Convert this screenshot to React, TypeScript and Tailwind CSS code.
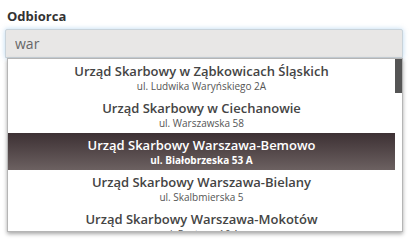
import { useState } from "react";

const OFFICES = [
  { id: "zab", name: "Urząd Skarbowy w Ząbkowicach Śląskich", street: "ul. Ludwika Waryńskiego 2A" },
  { id: "cie", name: "Urząd Skarbowy w Ciechanowie", street: "ul. Warszawska 58" },
  { id: "bem", name: "Urząd Skarbowy Warszawa-Bemowo", street: "ul. Białobrzeska 53 A" },
  { id: "bie", name: "Urząd Skarbowy Warszawa-Bielany", street: "ul. Skalbmierska 5" },
  { id: "mok", name: "Urząd Skarbowy Warszawa-Mokotów", street: "ul. Postępu 16 A" },
];

export default function App() {
  const [query, setQuery] = useState("war");
  const [active, setActive] = useState("bem");

  return (
    <div className="w-[415px] h-[245px] bg-white overflow-hidden font-['Open_Sans',sans-serif]">
      <div className="pl-[5px] pr-[12px] pt-[8px]">
        <label className="block pl-[2px] text-[13px] leading-[16px] font-bold text-[#333]">Odbiorca</label>

        <div className="relative mt-[5px]">
          {/* Input */}
          <input
            value={query}
            onChange={(e) => setQuery(e.target.value)}
            autoFocus
            className="w-full h-[29px] bg-[#e8e7e6] border border-[#c9d3da] rounded-t-[2px] px-[9px] text-[14px] text-[#666] outline-none shadow-[0_0_5px_rgba(120,180,230,0.5)] caret-[#222]"
          />

          {/* Dropdown */}
          <div className="absolute left-[2px] right-0 top-[29px] h-[174px] bg-white border border-[#b5b5b5] shadow-[0_2px_4px_rgba(0,0,0,0.35)] flex overflow-hidden">
            <ul className="flex-1">
              {OFFICES.map((o) => (
                <li
                  key={o.id}
                  onMouseEnter={() => setActive(o.id)}
                  className={`h-[37px] pt-[4px] text-center cursor-pointer ${
                    active === o.id ? "bg-gradient-to-b from-[#3d3134] to-[#6c6161] text-white" : "text-[#444]"
                  }`}
                >
                  <p className="text-[13px] leading-[17px] font-semibold">{o.name}</p>
                  <p className={`text-[10px] leading-[13px] ${active === o.id ? "font-bold" : "text-[#555]"}`}>{o.street}</p>
                </li>
              ))}
            </ul>
            {/* Scrollbar */}
            <div className="w-[7px] shrink-0 bg-white">
              <div className="h-[34px] bg-[#555]" />
            </div>
          </div>
        </div>
      </div>
    </div>
  );
}
